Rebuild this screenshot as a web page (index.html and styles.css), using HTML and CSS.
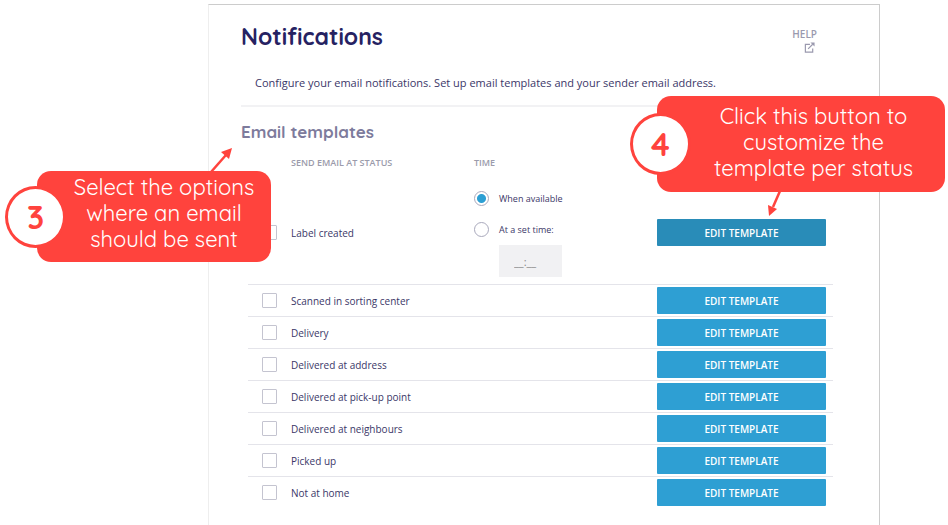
FILE: index.html
```html
<!DOCTYPE html>
<html lang="en">
<head>
    <meta charset="UTF-8">
    <meta name="viewport" content="width=device-width, initial-scale=1.0">
    <title>Notifications</title>
    <link rel="stylesheet" href="styles.css">
</head>
<body>

<main class="card">
    <header class="card-header">
        <h1>Notifications</h1>
        <a class="help" href="#">HELP
            <svg class="help-icon" viewBox="0 0 12 12" aria-hidden="true">
                <path d="M6.500 2.500H1.500V11H9.500V7M4.500 7.500L9.500 2.500"/>
                <path class="solid" d="M7 0.500H11.500V5Z"/>
            </svg>
        </a>
    </header>

    <p class="intro">Configure your email notifications. Set up email templates and your sender email address.</p>

    <h2>Email templates</h2>

    <table class="templates">
        <thead>
            <tr>
                <th class="col-check"></th>
                <th class="col-status">SEND EMAIL AT STATUS</th>
                <th>TIME</th>
                <th class="col-action"></th>
            </tr>
        </thead>
        <tbody>
            <tr class="expanded">
                <td><input type="checkbox" id="created"></td>
                <td><label for="created">Label created</label></td>
                <td>
                    <div class="times">
                        <label class="option"><input type="radio" name="time" checked> When available</label>
                        <label class="option"><input type="radio" name="time"> At a set time:</label>
                        <input class="time-input" type="text" placeholder="__:__" aria-label="Set time">
                    </div>
                </td>
                <td><button class="active" type="button">EDIT TEMPLATE</button></td>
            </tr>
            <tr>
                <td><input type="checkbox" id="scanned"></td>
                <td colspan="2"><label for="scanned">Scanned in sorting center</label></td>
                <td><button type="button">EDIT TEMPLATE</button></td>
            </tr>
            <tr>
                <td><input type="checkbox" id="delivery"></td>
                <td colspan="2"><label for="delivery">Delivery</label></td>
                <td><button type="button">EDIT TEMPLATE</button></td>
            </tr>
            <tr>
                <td><input type="checkbox" id="address"></td>
                <td colspan="2"><label for="address">Delivered at address</label></td>
                <td><button type="button">EDIT TEMPLATE</button></td>
            </tr>
            <tr>
                <td><input type="checkbox" id="pickup"></td>
                <td colspan="2"><label for="pickup">Delivered at pick-up point</label></td>
                <td><button type="button">EDIT TEMPLATE</button></td>
            </tr>
            <tr>
                <td><input type="checkbox" id="neighbours"></td>
                <td colspan="2"><label for="neighbours">Delivered at neighbours</label></td>
                <td><button type="button">EDIT TEMPLATE</button></td>
            </tr>
            <tr>
                <td><input type="checkbox" id="picked"></td>
                <td colspan="2"><label for="picked">Picked up</label></td>
                <td><button type="button">EDIT TEMPLATE</button></td>
            </tr>
            <tr>
                <td><input type="checkbox" id="nothome"></td>
                <td colspan="2"><label for="nothome">Not at home</label></td>
                <td><button type="button">EDIT TEMPLATE</button></td>
            </tr>
        </tbody>
    </table>
</main>

<!-- Instruction steps -->
<aside class="callout callout-options">
    <span class="step">3</span>
    <p>Select the options<br>where an email<br>should be sent</p>
    <svg class="arrow" viewBox="0 0 24 24" aria-hidden="true">
        <path d="M1 24L16 7"/>
        <path class="solid" d="M22 0L19 11L11 4Z"/>
    </svg>
</aside>

<aside class="callout callout-button">
    <span class="step">4</span>
    <p>Click this button to<br>customize the<br>template per status</p>
    <svg class="arrow" viewBox="0 0 24 24" aria-hidden="true">
        <path d="M13 -1L6 15"/>
        <path class="solid" d="M2 24L1 13L10 17Z"/>
    </svg>
</aside>

</body>
</html>
```
FILE: styles.css
```css
* {
    box-sizing: border-box;
}
body {
    margin: 0;
    min-height: 100vh;
    padding: 4px 68px 0 208px;
    display: flex;
    position: relative;
    overflow: hidden;
    background: #fff;
    color: #3b3768;
    font-family: "Open Sans", "Noto Sans", sans-serif;
    font-size: 11px;
}
.card {
    flex: 1;
    padding: 17px 46px 0 32px;
    border: 1px solid #ccc;
    border-left-color: #eee;
    border-bottom: none;
}
.card-header {
    display: flex;
    justify-content: space-between;
    align-items: flex-start;
    height: 47px;
}
h1, h2 {
    margin: 0;
    font-family: Quicksand, Lato, sans-serif;
}
h1 {
    color: #262262;
    font-size: 23px;
    line-height: 30px;
}
h2 {
    color: #7d7b9c;
    font-size: 17px;
    line-height: 24px;
}
.help {
    display: flex;
    flex-direction: column;
    align-items: center;
    margin-right: 16px;
    padding-top: 4px;
    color: #9a99ae;
    font-size: 10px;
    font-weight: 600;
    line-height: 16px;
    text-decoration: none;
}
.help-icon {
    width: 11px;
    height: 11px;
    margin-left: 10px;
    fill: none;
    stroke: #9a99ae;
    stroke-width: 1.3;
}
.help-icon .solid {
    fill: #9a99ae;
    stroke: none;
}
.intro {
    margin: 0 0 13px;
    padding: 6px 14px 14px;
    border-bottom: 2px solid #f2f2f4;
    font-size: 11px;
    line-height: 16px;
}
.templates {
    width: calc(100% - 7px);
    margin-left: 7px;
    table-layout: fixed;
    border-collapse: collapse;
}
.col-check {
    width: 43px;
}
.col-status {
    width: 183px;
}
.col-action {
    width: 176px;
}
th {
    height: 37px;
    padding: 0;
    color: #9b9bab;
    font-size: 9px;
    font-weight: 600;
    text-align: left;
}
td {
    height: 32px;
    padding: 0;
    border-top: 1px solid #e4e4ea;
}
.expanded td {
    height: 103px;
    border-top: none;
}
td label {
    font-size: 10px;
}
input {
    appearance: none;
    margin: 0;
    border: 1px solid #c4c4d0;
    background: #fff;
}
input[type="checkbox"] {
    display: block;
    width: 15px;
    height: 15px;
    margin-left: 14px;
    border-radius: 1px;
}
input[type="radio"] {
    width: 15px;
    height: 15px;
    border-color: #a9a9bc;
    border-radius: 50%;
}
input[type="radio"]:checked {
    background: radial-gradient(circle, #2c9fd3 4px, #fff 5px);
}
.times {
    display: flex;
    flex-direction: column;
    gap: 16px;
    padding-top: 4px;
}
.times .option {
    display: flex;
    align-items: center;
    gap: 10px;
    height: 15px;
    font-size: 9px;
}
.times .time-input {
    width: 63px;
    height: 32px;
    margin: -8px 0 0 25px;
    padding: 0 15px;
    border: none;
    background: #f1f1f3;
    color: #888;
    font: 11px "Open Sans", sans-serif;
}
.time-input::placeholder {
    color: #888;
}
button {
    display: block;
    width: 169px;
    height: 27px;
    margin-top: 1px;
    padding: 0;
    border: none;
    border-radius: 1px;
    background: #2e9fd3;
    color: #fff;
    font: 600 10px "Open Sans", "Noto Sans", sans-serif;
    cursor: pointer;
}
button:hover,
button.active {
    background: #298cb8;
}

.callout {
    position: absolute;
    display: flex;
    align-items: center;
    border-radius: 14px;
    background: #ff433d;
    color: #fff;
    font-family: Quicksand, Lato, sans-serif;
    font-size: 22px;
    line-height: 26px;
    text-align: center;
}
.callout p {
    flex: 1;
    margin: 0;
}
.callout-options {
    top: 171px;
    left: 37px;
    width: 234px;
    height: 91px;
    padding: 0 10px 7px 30px;
}
.callout-button {
    top: 96px;
    left: 657px;
    width: 288px;
    height: 96px;
    padding: 0 10px 4px 35px;
}
.step {
    position: absolute;
    top: 15px;
    left: -32px;
    width: 61px;
    height: 62px;
    border: 3px solid #ff433d;
    border-radius: 50%;
    background: #fff;
    color: #ff433d;
    font-size: 32px;
    font-weight: 700;
    line-height: 56px;
}
.callout-button .step {
    top: 17px;
    left: -27px;
}
.arrow {
    position: absolute;
    width: 24px;
    height: 24px;
    fill: none;
    stroke: #ff433d;
    stroke-width: 2.5;
}
.arrow .solid {
    fill: #ff433d;
    stroke: none;
}
.callout-options .arrow {
    top: -23px;
    left: 173px;
}
.callout-button .arrow {
    top: 96px;
    left: 110px;
}
```
